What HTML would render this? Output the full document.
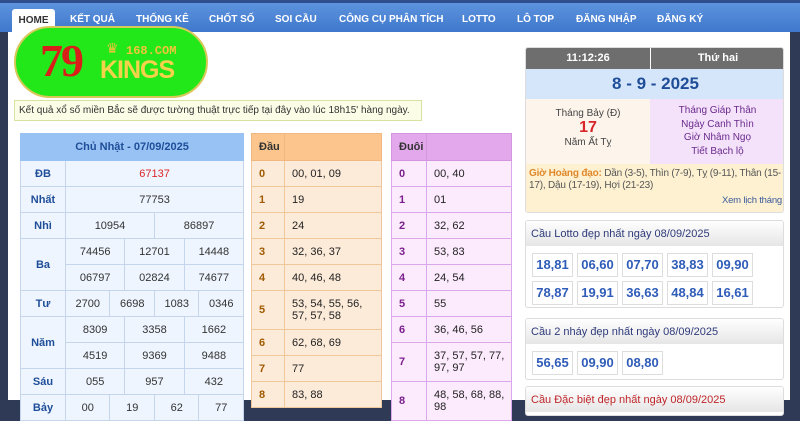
<!DOCTYPE html>
<html><head><meta charset="utf-8"><style>
*{box-sizing:border-box;margin:0;padding:0}
body{width:800px;height:400px;overflow:hidden;background:#2e3a56;font-family:"Liberation Sans",Arial,sans-serif;position:relative}
.abs{position:absolute}
.nav{left:0;top:0;width:800px;height:32px;background:linear-gradient(#5d93de,#3f78cc);border-top:3px solid #2e4f8c}
.nav span{position:absolute;top:11px;color:#fff;font-size:10px;font-weight:bold}
.home{left:12px;top:6px;width:43px;height:26px;background:#fff;border-radius:3px 3px 0 0;color:#333;font-size:10px;font-weight:bold;text-align:center;line-height:24px}
.content{left:8px;top:32px;width:782px;height:368px;background:#fff}
table{border-collapse:collapse;position:absolute;font-size:11px;table-layout:fixed}
td{text-align:center;height:26px;padding:0}
.kq td{border:1px solid #c5d6ec;background:#eef5fe;color:#333}
.kq td.l{color:#1f4e99;font-weight:bold}
.kq th{background:#99c2f4;color:#1f4e99;height:27px;font-size:11px;border:1px solid #99c2f4}
.dau td{border:1px solid #f0c79a;background:#fdebd9;text-align:left;padding-left:7px;color:#222}
.dau td.n{color:#a05a00;font-weight:bold}
.dau th{background:#fbc58d;color:#333;height:27px;text-align:left;padding-left:7px;font-size:11px;border:1px solid #f0b880}
.duoi td{border:1px solid #dca7ea;background:#fcebfd;text-align:left;padding-left:7px;color:#222}
.duoi td.n{color:#7a1f8c;font-weight:bold}
.duoi th{background:#e3a8ec;color:#333;height:27px;text-align:left;padding-left:7px;font-size:11px;border:1px solid #d395e0}
.box{position:absolute;left:525px;width:259px;border:1px solid #ddd;border-radius:3px;background:#fff;overflow:hidden}
.bh{height:25px;background:linear-gradient(#fff,#e6e6e6);font-size:11px;color:#2e3a7a;padding:7px 0 0 5px;white-space:nowrap}
.num{display:inline-block;width:41px;height:24px;border:1px solid #ddd;color:#2f5cb8;font-weight:bold;font-size:13px;text-align:center;line-height:22px;margin:0 0 4px 4px}
</style></head><body>
<div class="abs nav">
<div class="abs home">HOME</div>
<span style="left:70px">KẾT QUẢ</span><span style="left:136px">THỐNG KÊ</span><span style="left:209px">CHỐT SỐ</span><span style="left:275px">SOI CẦU</span><span style="left:339px">CÔNG CỤ PHÂN TÍCH</span><span style="left:462px">LOTTO</span><span style="left:517px">LÔ TOP</span><span style="left:576px">ĐĂNG NHẬP</span><span style="left:657px">ĐĂNG KÝ</span>
</div>
<div class="abs content"></div>
<div class="abs" style="left:200px;top:52px;font-size:14px;font-weight:bold;color:#222">t</div>
<div class="abs" style="left:14px;top:100px;width:408px;height:21px;background:#fbfde6;border:1px solid #d7e2a0;font-size:10px;color:#333;padding:4px 0 0 4px;white-space:nowrap">Kết quả xổ số miền Bắc sẽ được tường thuật trực tiếp tại đây vào lúc 18h15' hàng ngày.</div>
<div class="abs" style="left:14px;top:26px;width:194px;height:72px;border-radius:36px;background:#22e81a;border:2px solid #d8c85a"></div>
<div class="abs" style="left:40px;top:36px;font-size:46px;font-weight:bold;color:#d81f1a;font-family:'Liberation Serif',serif;letter-spacing:-2px;line-height:50px">79</div>
<div class="abs" style="left:126px;top:44px;font-size:12px;font-weight:bold;color:#f2c43a;font-family:'Liberation Mono',monospace">168.COM</div>
<div class="abs" style="left:100px;top:56px;font-size:25px;font-weight:bold;color:#f4d24a;line-height:28px;letter-spacing:-1px">KINGS</div>
<div class="abs" style="left:106px;top:40px;font-size:14px;color:#f2c43a">♛</div>

<table class="kq" style="left:20px;top:133px;width:223px">
<colgroup><col style="width:45px"><col span="12" style="width:14.83px"></colgroup>
<tr><th colspan="13">Chủ Nhật - 07/09/2025</th></tr>
<tr><td class="l">ĐB</td><td colspan="12" style="color:#d9262a">67137</td></tr>
<tr><td class="l">Nhất</td><td colspan="12">77753</td></tr>
<tr><td class="l">Nhì</td><td colspan="6">10954</td><td colspan="6">86897</td></tr>
<tr><td class="l" rowspan="2">Ba</td><td colspan="4">74456</td><td colspan="4">12701</td><td colspan="4">14448</td></tr>
<tr><td colspan="4">06797</td><td colspan="4">02824</td><td colspan="4">74677</td></tr>
<tr><td class="l">Tư</td><td colspan="3">2700</td><td colspan="3">6698</td><td colspan="3">1083</td><td colspan="3">0346</td></tr>
<tr><td class="l" rowspan="2">Năm</td><td colspan="4">8309</td><td colspan="4">3358</td><td colspan="4">1662</td></tr>
<tr><td colspan="4">4519</td><td colspan="4">9369</td><td colspan="4">9488</td></tr>
<tr><td class="l">Sáu</td><td colspan="4">055</td><td colspan="4">957</td><td colspan="4">432</td></tr>
<tr><td class="l">Bảy</td><td colspan="3">00</td><td colspan="3">19</td><td colspan="3">62</td><td colspan="3">77</td></tr>
</table>

<table class="dau" style="left:251px;top:133px;width:131px">
<colgroup><col style="width:33px"><col></colgroup>
<tr><th>Đầu</th><th></th></tr>
<tr><td class="n">0</td><td>00, 01, 09</td></tr>
<tr><td class="n">1</td><td>19</td></tr>
<tr><td class="n">2</td><td>24</td></tr>
<tr><td class="n">3</td><td>32, 36, 37</td></tr>
<tr><td class="n">4</td><td>40, 46, 48</td></tr>
<tr><td class="n" style="height:39px">5</td><td style="line-height:12px">53, 54, 55, 56,<br>57, 57, 58</td></tr>
<tr><td class="n">6</td><td>62, 68, 69</td></tr>
<tr><td class="n">7</td><td>77</td></tr>
<tr><td class="n">8</td><td>83, 88</td></tr>
</table>

<table class="duoi" style="left:391px;top:133px;width:121px">
<colgroup><col style="width:35px"><col></colgroup>
<tr><th>Đuôi</th><th></th></tr>
<tr><td class="n">0</td><td>00, 40</td></tr>
<tr><td class="n">1</td><td>01</td></tr>
<tr><td class="n">2</td><td>32, 62</td></tr>
<tr><td class="n">3</td><td>53, 83</td></tr>
<tr><td class="n">4</td><td>24, 54</td></tr>
<tr><td class="n">5</td><td>55</td></tr>
<tr><td class="n">6</td><td>36, 46, 56</td></tr>
<tr><td class="n" style="height:39px">7</td><td style="line-height:12px">37, 57, 57, 77,<br>97, 97</td></tr>
<tr><td class="n" style="height:39px">8</td><td style="line-height:12px">48, 58, 68, 88,<br>98</td></tr>
</table>

<div class="box" style="top:47px;height:166px">
<div class="abs" style="left:0;top:0;width:124px;height:21px;background:#6e6e6e;color:#fff;font-size:11px;font-weight:bold;text-align:center;line-height:21px">11:12:26</div>
<div class="abs" style="left:125px;top:0;width:134px;height:21px;background:#6e6e6e;color:#fff;font-size:11px;font-weight:bold;text-align:center;line-height:21px">Thứ hai</div>
<div class="abs" style="left:0;top:21px;width:259px;height:30px;background:#d6e6fa;color:#1f4e99;font-size:17px;font-weight:bold;text-align:center;line-height:30px">8 - 9 - 2025</div>
<div class="abs" style="left:0;top:51px;width:124px;height:65px;background:#fdf5ec;text-align:center;font-size:10px;color:#444;padding-top:9px">Tháng Bảy (Đ)<br><span style="color:#d9262a;font-size:16px;font-weight:bold;line-height:18px">17</span><br>Năm Ất Tỵ</div>
<div class="abs" style="left:124px;top:51px;width:135px;height:65px;background:#f4e2fb;text-align:center;font-size:10px;color:#6a2a8c;padding-top:5px;line-height:13.5px">Tháng Giáp Thân<br>Ngày Canh Thìn<br>Giờ Nhâm Ngọ<br>Tiết Bạch lộ</div>
<div class="abs" style="left:0;top:116px;width:259px;height:50px;background:#fdf1d2;font-size:10px;color:#555;padding:4px 3px;line-height:12px;letter-spacing:-0.2px"><span style="color:#e0882a;font-weight:bold">Giờ Hoàng đạo:</span> Dần (3-5), Thìn (7-9), Tỵ (9-11), Thân (15-17), Dậu (17-19), Hợi (21-23)<div style="text-align:right;color:#3a5a9a;font-size:9.5px;margin-top:3px">Xem lịch tháng</div></div>
</div>

<div class="box" style="top:220px;height:88px">
<div class="bh">Cầu Lotto đẹp nhất ngày 08/09/2025</div>
<div style="padding:7px 0 0 2px;white-space:nowrap;line-height:0"><span class="num">18,81</span><span class="num">06,60</span><span class="num">07,70</span><span class="num">38,83</span><span class="num">09,90</span><br><span class="num">78,87</span><span class="num">19,91</span><span class="num">36,63</span><span class="num">48,84</span><span class="num">16,61</span></div>
</div>
<div class="box" style="top:318px;height:62px">
<div class="bh">Cầu 2 nháy đẹp nhất ngày 08/09/2025</div>
<div style="padding:7px 0 0 2px;line-height:0"><span class="num">56,65</span><span class="num">09,90</span><span class="num">08,80</span></div>
</div>
<div class="box" style="top:386px;height:30px">
<div class="bh" style="color:#c0262a">Cầu Đặc biệt đẹp nhất ngày 08/09/2025</div>
</div>
</body></html>
